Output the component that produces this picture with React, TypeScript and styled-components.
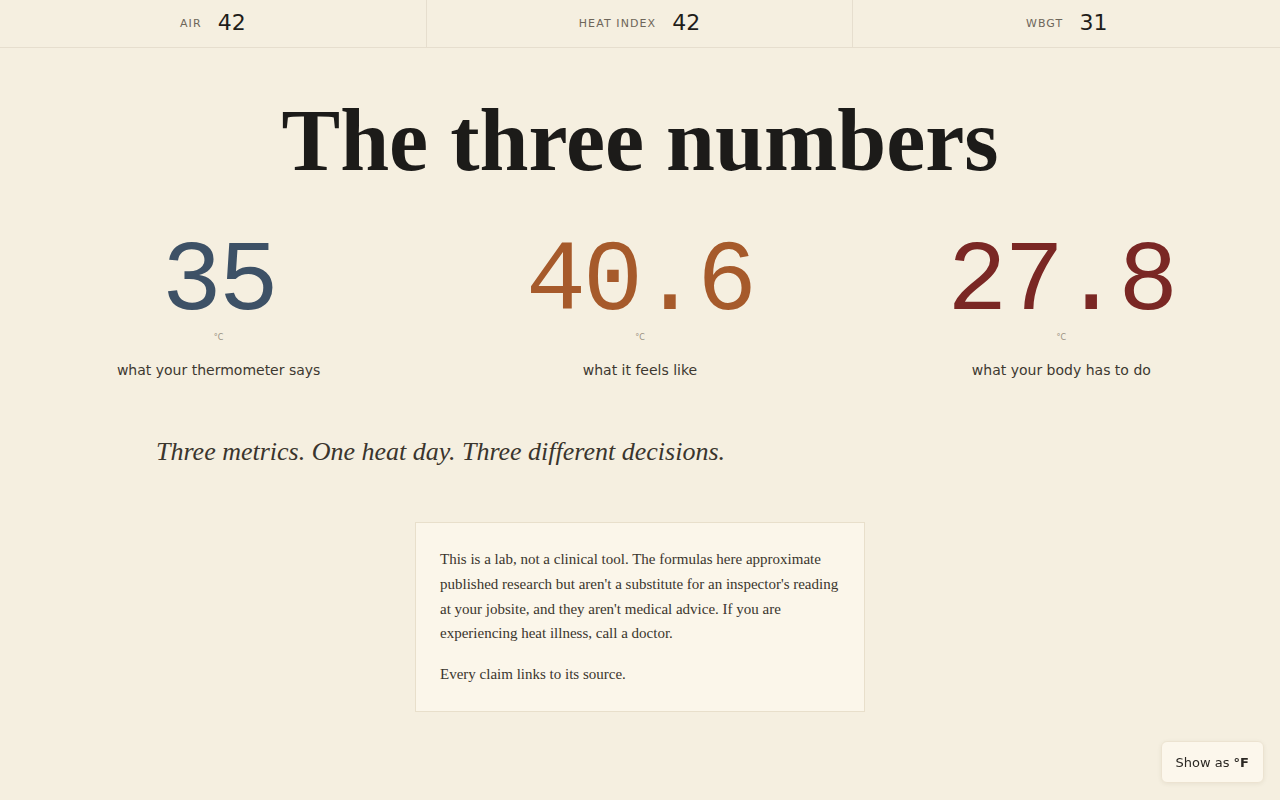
import React, { useState } from 'react';
import styled, { createGlobalStyle } from 'styled-components';

const GlobalStyle = createGlobalStyle`
  html, body {
    margin: 0;
    padding: 0;
    background: #f5efe0;
  }
  body {
    font-family: "DejaVu Sans", sans-serif;
    color: #3a352d;
  }
  * { box-sizing: border-box; }
`;

const TopBar = styled.header`
  display: grid;
  grid-template-columns: repeat(3, 1fr);
  height: 48px;
  border-bottom: 1px solid #e6dece;
`;

const TopCell = styled.div`
  display: flex;
  align-items: center;
  justify-content: center;
  gap: 16px;
  border-right: 1px solid #e6dece;
  &:last-child { border-right: none; }
`;

const TopLabel = styled.span`
  font-size: 11px;
  letter-spacing: 0.1em;
  text-transform: uppercase;
  color: #6e665a;
`;

const TopValue = styled.span`
  font-size: 22px;
  color: #1f1d1a;
  padding-bottom: 2px;
`;

const Main = styled.main`
  padding: 0 8px;
`;

const Title = styled.h1`
  margin: 49px 0 0;
  text-align: center;
  font-family: "Liberation Serif", serif;
  font-weight: 700;
  font-size: 88px;
  line-height: 1;
  color: #1c1b19;
`;

const Metrics = styled.section`
  display: grid;
  grid-template-columns: repeat(3, 1fr);
  margin-top: 48px;
`;

const Metric = styled.div`
  display: flex;
  flex-direction: column;
  align-items: center;
`;

const Big = styled.div<{ $tone: string }>`
  font-family: "Liberation Mono", monospace;
  font-size: 100px;
  line-height: 1;
  letter-spacing: -0.03em;
  color: ${(p) => p.$tone};
`;

const Unit = styled.div`
  font-size: 8px;
  color: #9a9182;
`;

const Caption = styled.div`
  margin-top: 20px;
  font-size: 14px;
  color: #3d3830;
`;

const Tagline = styled.p`
  max-width: 968px;
  margin: 59px auto 0;
  font-family: "Liberation Serif", serif;
  font-style: italic;
  font-size: 26px;
  color: #3a352d;
`;

const Note = styled.aside`
  width: 450px;
  margin: 55px auto 0;
  padding: 24px;
  background: #fbf6ea;
  border: 1px solid #e8dfcb;
  font-family: "Liberation Serif", serif;
  font-size: 15px;
  line-height: 1.65;
  color: #3a352d;

  p { margin: 0; }
  p + p { margin-top: 16px; }
`;

const UnitToggle = styled.button`
  position: fixed;
  right: 16px;
  bottom: 17px;
  padding: 13px 14px 12px;
  font-family: "DejaVu Sans", sans-serif;
  font-size: 13px;
  color: #2b2823;
  background: #fcf7ec;
  border: 1px solid #ece3d1;
  border-radius: 6px;
  box-shadow: 0 1px 4px rgba(80, 60, 30, 0.08);
  cursor: pointer;

  b { font-weight: 700; }
`;

const readings = [
  { label: 'Air', value: '42' },
  { label: 'Heat Index', value: '42' },
  { label: 'WBGT', value: '31' },
];

const metrics = [
  { value: '35', tone: '#3d5166', caption: 'what your thermometer says' },
  { value: '40.6', tone: '#a65a2b', caption: 'what it feels like' },
  { value: '27.8', tone: '#7a2724', caption: 'what your body has to do' },
];

export default function App() {
  const [fahrenheit, setFahrenheit] = useState(false);

  return (
    <>
      <GlobalStyle />
      <TopBar>
        {readings.map((r) => (
          <TopCell key={r.label}>
            <TopLabel>{r.label}</TopLabel>
            <TopValue>{r.value}</TopValue>
          </TopCell>
        ))}
      </TopBar>

      <Main>
        <Title>The three numbers</Title>

        <Metrics>
          {metrics.map((m) => (
            <Metric key={m.caption}>
              <Big $tone={m.tone}>{m.value}</Big>
              <Unit>°C</Unit>
              <Caption>{m.caption}</Caption>
            </Metric>
          ))}
        </Metrics>

        <Tagline>Three metrics. One heat day. Three different decisions.</Tagline>

        <Note>
          <p>
            This is a lab, not a clinical tool. The formulas here approximate published research
            but aren't a substitute for an inspector's reading at your jobsite, and they aren't
            medical advice. If you are experiencing heat illness, call a doctor.
          </p>
          <p>Every claim links to its source.</p>
        </Note>
      </Main>

      <UnitToggle onClick={() => setFahrenheit(!fahrenheit)}>
        Show as <b>°{fahrenheit ? 'C' : 'F'}</b>
      </UnitToggle>
    </>
  );
}
